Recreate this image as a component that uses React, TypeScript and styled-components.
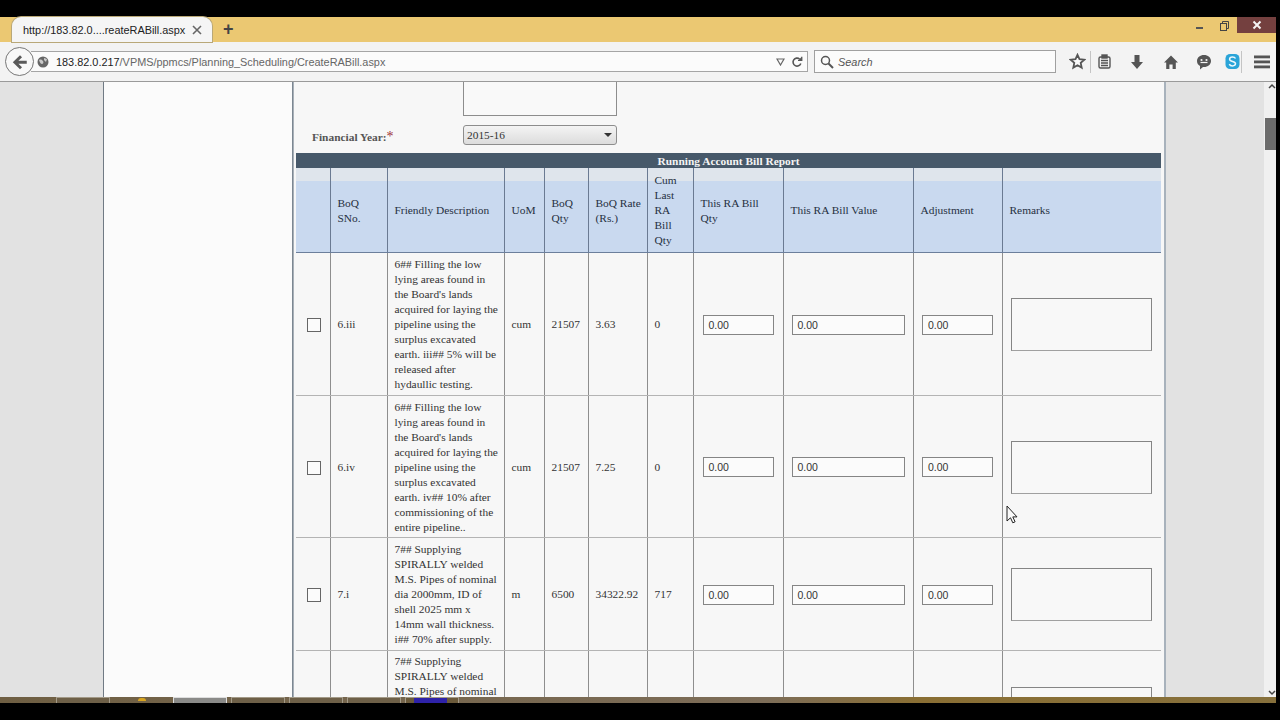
import React from 'react';
import styled, { createGlobalStyle } from 'styled-components';

interface BillRow {
  id: string;
  description: string;
  uom: string;
  qty: string;
  rate: string;
  cum: string;
}

const rows: BillRow[] = [
  {
    id: '6.iii',
    description:
      "6## Filling the low\nlying areas found in\nthe Board's lands\nacquired for laying the\npipeline using the\nsurplus excavated\nearth. iii## 5% will be\nreleased after\nhydaullic testing.",
    uom: 'cum',
    qty: '21507',
    rate: '3.63',
    cum: '0',
  },
  {
    id: '6.iv',
    description:
      "6## Filling the low\nlying areas found in\nthe Board's lands\nacquired for laying the\npipeline using the\nsurplus excavated\nearth. iv## 10% after\ncommissioning of the\nentire pipeline..",
    uom: 'cum',
    qty: '21507',
    rate: '7.25',
    cum: '0',
  },
  {
    id: '7.i',
    description:
      '7## Supplying\nSPIRALLY welded\nM.S. Pipes of nominal\ndia 2000mm, ID of\nshell 2025 mm x\n14mm wall thickness.\ni## 70% after supply.',
    uom: 'm',
    qty: '6500',
    rate: '34322.92',
    cum: '717',
  },
];

const GlobalStyle = createGlobalStyle`
  html, body {
    margin: 0;
    padding: 0;
    background: #000;
    overflow: hidden;
  }
`;

const Screen = styled.div`
  width: 1280px;
  height: 720px;
  box-sizing: border-box;
  padding: 17px 4px 17px 0;
  background: #000;
  overflow: hidden;
`;

const Browser = styled.div`
  height: 686px;
  display: flex;
  flex-direction: column;
  font-family: 'Liberation Sans', Arial, sans-serif;
`;

const TabStrip = styled.div`
  height: 25px;
  flex: none;
  display: flex;
  align-items: flex-end;
  padding-left: 12px;
  background: #ebc872;
  position: relative;
`;

const Tab = styled.div`
  width: 200px;
  height: 25px;
  box-sizing: border-box;
  padding: 0 10px 0 11px;
  display: flex;
  align-items: center;
  justify-content: space-between;
  background: #f5f5f5;
  border-radius: 9px 9px 0 0;
  box-shadow: 0 0 0 1px #b9a878;
  font-size: 10.9px;
  color: #222;
`;

const NewTab = styled.span`
  margin: 0 0 4px 11px;
  font-size: 18px;
  line-height: 18px;
  font-weight: 700;
  color: #444;
`;

const WindowControls = styled.div`
  margin-left: auto;
  align-self: flex-start;
  height: 16px;
  display: flex;
  align-items: center;
`;

const WindowButton = styled.div`
  width: 25px;
  height: 16px;
  display: flex;
  align-items: center;
  justify-content: center;
`;

const CloseButton = styled(WindowButton)`
  width: 39px;
  background: #74403f;
`;

const NavBar = styled.div`
  height: 39px;
  flex: none;
  display: flex;
  align-items: center;
  padding-left: 5px;
  background: #f3f3f3;
  border-bottom: 1px solid #9a9a9a;
`;

const BackButton = styled.div`
  width: 29px;
  height: 29px;
  flex: none;
  box-sizing: border-box;
  border: 1px solid #777;
  border-radius: 50%;
  background: #f8f8f8;
  display: flex;
  align-items: center;
  justify-content: center;
  z-index: 1;
`;

const UrlBar = styled.div`
  width: 777px;
  height: 21px;
  flex: none;
  margin-left: -3px;
  padding-left: 6px;
  box-sizing: border-box;
  display: flex;
  align-items: center;
  background: #fbfbfb;
  border: 1px solid #a5a5a5;
  border-left: none;
  font-size: 10.9px;
`;

const UrlHost = styled.span`
  margin-left: 7px;
  color: #222;
`;

const UrlPath = styled.span`
  color: #666;
`;

const UrlActions = styled.div`
  margin-left: auto;
  padding-right: 4px;
  display: flex;
  align-items: center;
  gap: 6px;
`;

const SearchBox = styled.div`
  width: 242px;
  height: 23px;
  flex: none;
  margin-left: 6px;
  padding-left: 5px;
  box-sizing: border-box;
  display: flex;
  align-items: center;
  gap: 4px;
  background: #fbfbfb;
  border: 1px solid #a0a0a0;
  font-size: 10.9px;
  font-style: italic;
  color: #555;
`;

const ToolIcons = styled.div`
  flex: 1;
  height: 30px;
  padding-left: 8px;
  display: flex;
  align-items: center;
  color: #555;
`;

const ToolSlot = styled.div<{ $width: number }>`
  width: ${(p) => p.$width}px;
  height: 30px;
  flex: none;
  display: flex;
  align-items: center;
  justify-content: center;
`;

const MenuSlot = styled(ToolSlot)`
  margin-left: 6px;
`;

const ToolDivider = styled.div`
  width: 1px;
  height: 22px;
  flex: none;
  background: #c4c4c4;
`;

const Page = styled.div`
  flex: 1;
  min-height: 0;
  display: flex;
  position: relative;
  overflow: hidden;
  background: #e2e2e2;
`;

const Gutter = styled.div`
  width: 103px;
  flex: none;
  background: #e2e2e2;
`;

const Sidebar = styled.div`
  width: 188px;
  flex: none;
  background: #fbfbfb;
  border-left: 1px solid #707a84;
  border-right: 1px solid #7c8792;
`;

const Content = styled.div`
  width: 873px;
  flex: none;
  box-sizing: border-box;
  padding-left: 2px;
  background: #f7f7f7;
  border-left: 1px solid #a8b0b8;
  border-right: 2px solid #a8b2bc;
  font-family: 'Liberation Serif', 'Times New Roman', serif;
  font-size: 11.4px;
  color: #333;
`;

const RightGutter = styled.div`
  width: 98px;
  flex: none;
  background: #e2e2e2;
`;

const ScrollTrack = styled.div`
  flex: 1;
  display: flex;
  flex-direction: column;
  align-items: flex-end;
  background: #f0f0f0;
`;

const ScrollArrow = styled.div`
  height: 8px;
  width: 9px;
  flex: none;
  display: flex;
  align-items: center;
  justify-content: center;
  color: #444;
`;

const ScrollThumb = styled.div`
  width: 11px;
  height: 32px;
  margin-top: 28px;
  flex: none;
  background: #6b6b6b;
`;

const ScrollSpacer = styled.div`
  flex: 1;
`;

const FormArea = styled.div`
  height: 71px;
  display: flex;
  flex-direction: column;
`;

const TopBox = styled.div`
  width: 154px;
  height: 34px;
  flex: none;
  margin-left: 167px;
  box-sizing: border-box;
  background: #f9f9f9;
  border: 1px solid #8d8d8d;
  border-top: none;
`;

const FormRow = styled.div`
  display: flex;
  align-items: flex-start;
  margin-top: 9px;
`;

const FieldLabel = styled.label`
  width: 151px;
  margin-left: 16px;
  padding-top: 4px;
  font-weight: 700;
  color: #555;
  line-height: 15px;
`;

const Required = styled.span`
  color: #a03038;
  font-size: 14px;
  font-weight: 400;
`;

const FakeSelect = styled.div`
  width: 154px;
  height: 20px;
  box-sizing: border-box;
  padding: 0 4px 0 3px;
  display: flex;
  align-items: center;
  justify-content: space-between;
  border: 1px solid #8d8d8d;
  border-radius: 3px;
  background: linear-gradient(#f4f4f4, #dcdcdc);
  line-height: 16px;
  color: #333;
`;

const Caret = styled.span`
  width: 0;
  height: 0;
  border-left: 4px solid transparent;
  border-right: 4px solid transparent;
  border-top: 4px solid #333;
`;

const BillTable = styled.table`
  width: 865px;
  table-layout: fixed;
  border-collapse: collapse;
  line-height: 15px;
`;

const TitleCell = styled.th`
  height: 15px;
  box-sizing: border-box;
  padding: 1px 0 0;
  background: #47596a;
  color: #f4f4f4;
  font-weight: 700;
  text-align: center;
  line-height: 14px;
`;

const HeadCell = styled.th`
  height: 84px;
  padding: 2px 6px 0 7px;
  box-sizing: border-box;
  text-align: left;
  font-weight: 400;
  white-space: pre;
  color: #26303f;
  background: linear-gradient(#dfe5ec 0, #dfe5ec 13px, #c9d9ef 13px, #c9d9ef 100%);
  border-bottom: 1px solid #6c7f9c;
  border-left: 1px solid #6a7a92;

  &:first-child {
    border-left: none;
  }
`;

const BodyRow = styled.tr<{ $height: number }>`
  height: ${(p) => p.$height}px;
`;

const BodyCell = styled.td`
  padding: 2px 6px 0 7px;
  box-sizing: border-box;
  vertical-align: middle;
  border-bottom: 1px solid #b4b4b4;
  border-left: 1px solid #8e8e8e;

  &:first-child {
    border-left: none;
    padding-left: 8px;
    padding-right: 6px;
    text-align: center;
  }
`;

const DescCell = styled(BodyCell)`
  padding-top: 4px;
  padding-bottom: 2px;
  white-space: pre;
`;

const CenterCell = styled(BodyCell)`
  text-align: center;
  padding-left: 6px;
  padding-right: 6px;
`;

const TopCell = styled(BodyCell)`
  vertical-align: top;
  padding-top: 3px;
  white-space: pre;
`;

const CheckBox = styled.span`
  display: inline-block;
  width: 12px;
  height: 12px;
  vertical-align: middle;
  border: 1px solid #666;
  background: #fbfbfb;
`;

const AmountInput = styled.div<{ $wide?: boolean }>`
  display: block;
  width: ${(p) => (p.$wide ? 113 : 71)}px;
  height: 20px;
  margin: 0 auto;
  padding-left: 5px;
  box-sizing: border-box;
  background: #fbfbfb;
  border: 1px solid #858585;
  font-family: 'Liberation Sans', Arial, sans-serif;
  font-size: 10.5px;
  line-height: 19px;
  text-align: left;
  color: #333;
`;

const RemarksBox = styled.div`
  width: 141px;
  height: 53px;
  margin: 0 auto;
  box-sizing: border-box;
  background: #f8f8f8;
  border: 1px solid #858585;
  border-bottom-color: #a0a0a0;
`;

const Pointer = styled.svg`
  position: absolute;
  left: 1006px;
  top: 423px;
`;

const Taskbar = styled.div`
  height: 6px;
  flex: none;
  display: flex;
  padding-left: 56px;
  gap: 4px;
  background: linear-gradient(90deg, #6f5f43, #7d6d58 60%, #8a6f34 72%, #86703c);
`;

const TaskButton = styled.div<{ $active?: boolean; $blue?: boolean }>`
  width: 54px;
  height: 6px;
  flex: none;
  box-sizing: border-box;
  border-top: 1px solid ${(p) => (p.$active ? '#ddd' : '#a39a88')};
  border-left: 1px solid ${(p) => (p.$active ? '#ddd' : '#a39a88')};
  border-right: 1px solid ${(p) => (p.$active ? '#ddd' : '#a39a88')};
  background: ${(p) =>
    p.$active
      ? '#8a8a88'
      : p.$blue
        ? 'linear-gradient(90deg,#6b5a3a 15%,#2e22a8 15%,#2e22a8 78%,#6b5a3a 78%)'
        : '#6e6048'};
`;

const TaskGap = styled.div`
  width: 55px;
  flex: none;
  display: flex;
  justify-content: center;
`;

const TraySun = styled.span`
  width: 8px;
  height: 3px;
  margin-top: 1px;
  background: #d9a520;
  border-radius: 4px 4px 0 0;
`;

const Icon = ({ d, size = 16, fill = 'currentColor' }: { d: string; size?: number; fill?: string }) => (
  <svg width={size} height={size} viewBox="0 0 16 16" fill={fill}>
    <path d={d} />
  </svg>
);

const App: React.FC = () => {
  return (
    <>
      <GlobalStyle />
      <Screen>
        <Browser>
          <TabStrip>
            <Tab>
              <span>http://183.82.0....reateRABill.aspx</span>
              <svg width="10" height="10" viewBox="0 0 10 10" stroke="#666" strokeWidth="1.6">
                <path d="M1 1l8 8M9 1l-8 8" />
              </svg>
            </Tab>
            <NewTab>+</NewTab>
            <WindowControls>
              <WindowButton>
                <svg width="10" height="10" viewBox="0 0 10 10">
                  <rect x="1" y="7" width="7" height="2" fill="#555" />
                </svg>
              </WindowButton>
              <WindowButton>
                <svg width="11" height="11" viewBox="0 0 11 11" fill="none" stroke="#444" strokeWidth="1">
                  <rect x="1.5" y="3.5" width="6" height="7" />
                  <path d="M3.5 3V1.5h6v7H8" />
                </svg>
              </WindowButton>
              <CloseButton>
                <svg width="10" height="10" viewBox="0 0 10 10" stroke="#f4f4f4" strokeWidth="2">
                  <path d="M1.5 1.5l7 7M8.5 1.5l-7 7" />
                </svg>
              </CloseButton>
            </WindowControls>
          </TabStrip>

          <NavBar>
            <BackButton>
              <svg width="18" height="18" viewBox="0 0 16 16" fill="#5a5a5a">
                <path d="M8 2l1.8 1.8L6.6 6.8H14v2.8H6.6l3.2 3L8 14.4 1.6 8.2z" />
              </svg>
            </BackButton>
            <UrlBar>
              <svg width="12" height="12" viewBox="0 0 12 12">
                <circle cx="6" cy="6" r="5.5" fill="#666" />
                <path d="M2 4c2-1 3 0 4 1s0 3-1 3-2-1-3-4zM7 2l3 1-1 3-2-2z" fill="#c9c9c9" />
              </svg>
              <UrlHost>183.82.0.217</UrlHost>
              <UrlPath>/VPMS/ppmcs/Planning_Scheduling/CreateRABill.aspx</UrlPath>
              <UrlActions>
                <svg width="9" height="8" viewBox="0 0 9 8" fill="none" stroke="#666" strokeWidth="1.2">
                  <path d="M1 1h7L4.5 7z" />
                </svg>
                <svg width="12" height="12" viewBox="0 0 12 12" fill="none" stroke="#555" strokeWidth="1.6">
                  <path d="M9.8 7.5A4 4 0 1 1 8.6 3" />
                  <path d="M7 4.5h3.8V.8" strokeWidth="1.2" fill="#555" />
                </svg>
              </UrlActions>
            </UrlBar>
            <SearchBox>
              <svg width="14" height="14" viewBox="0 0 14 14" fill="none" stroke="#555" strokeWidth="1.5">
                <circle cx="5.5" cy="5.5" r="4" />
                <path d="M8.5 8.5l4.5 4.5" strokeWidth="2" />
              </svg>
              Search
            </SearchBox>
            <ToolIcons>
              <ToolSlot $width={26}>
                <svg width="17" height="17" viewBox="0 0 17 17" fill="#fafafa" stroke="#555" strokeWidth="1.8">
                  <path d="M8.5 1.8l2 4.4 4.8.5-3.6 3.2 1 4.7-4.2-2.4-4.2 2.4 1-4.7L1.7 6.7l4.8-.5z" />
                </svg>
              </ToolSlot>
              <ToolDivider />
              <ToolSlot $width={26}>
                <svg width="15" height="15" viewBox="0 0 15 15" fill="none" stroke="#555" strokeWidth="1.4">
                  <rect x="2" y="3" width="11" height="11" rx="1.5" />
                  <rect x="5" y="1" width="5" height="3" fill="#555" />
                  <path d="M4 6.5h7M4 9h7M4 11.5h7" />
                </svg>
              </ToolSlot>
              <ToolSlot $width={40}>
                <Icon d="M5.5 1h5v7h3.5L8 15 2 8h3.5z" />
              </ToolSlot>
              <ToolSlot $width={28}>
                <Icon d="M8 1.5l7 7h-2.2V15H9.6v-4.4H6.4V15H3.2V8.5H1z" />
              </ToolSlot>
              <ToolSlot $width={38}>
                <svg width="16" height="16" viewBox="0 0 16 16">
                  <path d="M8 1c4 0 7 2.600 7 6s-3 6-7 6l-1 0-3 2.500V12C2 11 1 9.200 1 7c0-3.400 3-6 7-6z" fill="#555" />
                  <circle cx="5.500" cy="6" r="1.100" fill="#f3f3f3" />
                  <circle cx="10.500" cy="6" r="1.100" fill="#f3f3f3" />
                  <path d="M4.500 8.500h7" stroke="#f3f3f3" strokeWidth="1.200" />
                </svg>
              </ToolSlot>
              <ToolSlot $width={18}>
                <svg width="15" height="17" viewBox="0 0 15 17">
                  <rect x="0.500" y="1" width="14" height="15" rx="4.500" fill="#2aa4d8" />
                  <path d="M10.500 5.500C10 4.500 9 4 7.500 4 5.800 4 4.600 4.800 4.600 6.200c0 3 5.900 1.600 5.900 4.400 0 1.400-1.300 2.300-3 2.300-1.600 0-2.700-.6-3.200-1.800" fill="none" stroke="#eef8fc" strokeWidth="1.500" />
                </svg>
              </ToolSlot>
              <ToolDivider />
              <MenuSlot $width={28}>
                <svg width="16" height="14" viewBox="0 0 16 14" fill="#555">
                  <rect x="0" y="0.500" width="16" height="2.800" />
                  <rect x="0" y="5.500" width="16" height="2.800" />
                  <rect x="0" y="10.500" width="16" height="2.800" />
                </svg>
              </MenuSlot>
            </ToolIcons>
          </NavBar>

          <Page>
            <Gutter />
            <Sidebar />
            <Content>
              <FormArea>
                <TopBox />
                <FormRow>
                  <FieldLabel>
                    Financial Year:<Required>*</Required>
                  </FieldLabel>
                  <FakeSelect>
                    2015-16
                    <Caret />
                  </FakeSelect>
                </FormRow>
              </FormArea>
              <BillTable>
                <colgroup>
                  {[34, 57, 117, 40, 44, 59, 46, 90, 130, 89, 159].map((w, i) => (
                    <col key={i} style={{ width: w }} />
                  ))}
                </colgroup>
                <thead>
                  <tr>
                    <TitleCell colSpan={11}>Running Account Bill Report</TitleCell>
                  </tr>
                  <tr>
                    <HeadCell />
                    <HeadCell>{'BoQ\nSNo.'}</HeadCell>
                    <HeadCell>Friendly Description</HeadCell>
                    <HeadCell>UoM</HeadCell>
                    <HeadCell>{'BoQ\nQty'}</HeadCell>
                    <HeadCell>{'BoQ Rate\n(Rs.)'}</HeadCell>
                    <HeadCell>{'Cum\nLast\nRA\nBill\nQty'}</HeadCell>
                    <HeadCell>{'This RA Bill\nQty'}</HeadCell>
                    <HeadCell>This RA Bill Value</HeadCell>
                    <HeadCell>Adjustment</HeadCell>
                    <HeadCell>Remarks</HeadCell>
                  </tr>
                </thead>
                <tbody>
                  {rows.map((row, i) => (
                    <BodyRow key={row.id} $height={[143, 142, 113][i]}>
                      <BodyCell>
                        <CheckBox />
                      </BodyCell>
                      <BodyCell>{row.id}</BodyCell>
                      <DescCell>{row.description}</DescCell>
                      <BodyCell>{row.uom}</BodyCell>
                      <BodyCell>{row.qty}</BodyCell>
                      <BodyCell>{row.rate}</BodyCell>
                      <BodyCell>{row.cum}</BodyCell>
                      <CenterCell>
                        <AmountInput>0.00</AmountInput>
                      </CenterCell>
                      <CenterCell>
                        <AmountInput $wide>0.00</AmountInput>
                      </CenterCell>
                      <CenterCell>
                        <AmountInput>0.00</AmountInput>
                      </CenterCell>
                      <CenterCell>
                        <RemarksBox />
                      </CenterCell>
                    </BodyRow>
                  ))}
                  <BodyRow $height={125}>
                    <BodyCell />
                    <BodyCell />
                    <TopCell>{'7## Supplying\nSPIRALLY welded\nM.S. Pipes of nominal'}</TopCell>
                    <BodyCell />
                    <BodyCell />
                    <BodyCell />
                    <BodyCell />
                    <BodyCell />
                    <BodyCell />
                    <BodyCell />
                    <CenterCell>
                      <RemarksBox />
                    </CenterCell>
                  </BodyRow>
                </tbody>
              </BillTable>
            </Content>
            <RightGutter />
            <ScrollTrack>
              <ScrollArrow>
                <svg width="8" height="6" viewBox="0 0 8 6" fill="none" stroke="currentColor" strokeWidth="1.500">
                  <path d="M1 5l3-3 3 3" />
                </svg>
              </ScrollArrow>
              <ScrollThumb />
              <ScrollSpacer />
              <ScrollArrow>
                <svg width="8" height="6" viewBox="0 0 8 6" fill="none" stroke="currentColor" strokeWidth="1.500">
                  <path d="M1 1l3 3 3-3" />
                </svg>
              </ScrollArrow>
            </ScrollTrack>
            <Pointer width="12" height="19" viewBox="0 0 12 19">
              <path d="M1 1v15l3.500-3.200 2.300 5 2.300-1-2.300-4.900H11z" fill="#fafafa" stroke="#222" strokeWidth="1" />
            </Pointer>
          </Page>

          <Taskbar>
            <TaskButton />
            <TaskGap>
              <TraySun />
            </TaskGap>
            <TaskButton $active />
            <TaskButton />
            <TaskButton />
            <TaskButton />
            <TaskButton $blue />
          </Taskbar>
        </Browser>
      </Screen>
    </>
  );
};

export default App;
